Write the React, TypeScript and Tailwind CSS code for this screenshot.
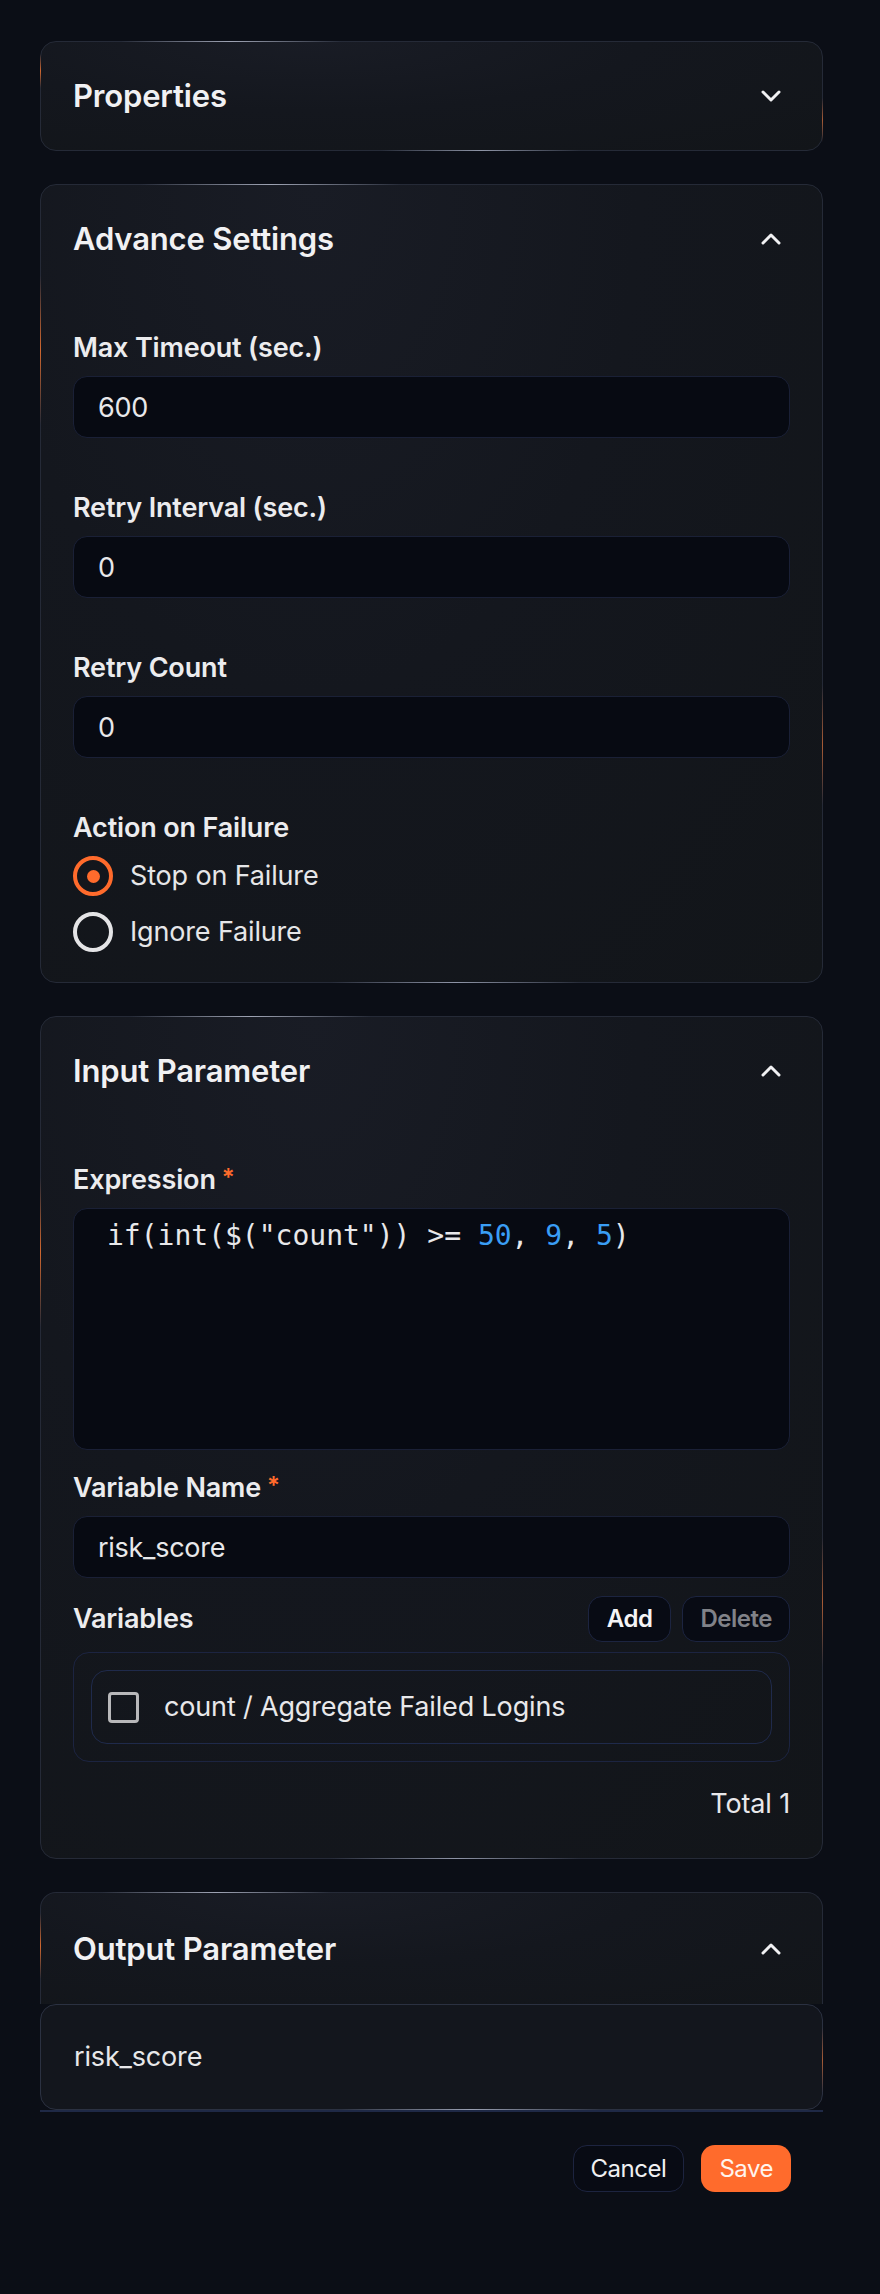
import React from "react";
import { ChevronDown, ChevronUp } from "lucide-react";

type BeamSet = {
  top: string;
  bottom: string;
  left: string;
  right: string;
};

// Thin light streaks running along the card edges.
function Beams({ b }: { b: BeamSet }) {
  return (
    <>
      <span
        className={`pointer-events-none absolute -top-px h-px bg-[linear-gradient(90deg,transparent,#9ea3b3,transparent)] ${b.top}`}
      />
      <span
        className={`pointer-events-none absolute -bottom-px h-px bg-[linear-gradient(90deg,transparent,#8e94a6,transparent)] ${b.bottom}`}
      />
      <span
        className={`pointer-events-none absolute -left-px w-px bg-[linear-gradient(180deg,transparent,#d0672f,transparent)] ${b.left}`}
      />
      <span
        className={`pointer-events-none absolute -right-px w-px bg-[linear-gradient(180deg,transparent,#a65a35,transparent)] ${b.right}`}
      />
    </>
  );
}

const cardSurface =
  "relative rounded-2xl border border-[#252a37] bg-[radial-gradient(ellipse_at_35%_0%,#191c25_0%,#14171e_45%,#121519_100%)]";

function CardHeader({ title, open, h = "h-[108px]" }: { title: string; open: boolean; h?: string }) {
  return (
    <div className={`flex items-center justify-between pl-[32px] pr-[35px] ${h}`}>
      <h2 className="text-[31px] font-semibold leading-[40px] text-[#f1f1f3]">{title}</h2>
      {open ? (
        <ChevronUp size={32} strokeWidth={2.25} className="text-[#f1f1f3]" />
      ) : (
        <ChevronDown size={32} strokeWidth={2.25} className="text-[#f1f1f3]" />
      )}
    </div>
  );
}

function Label({ children, required }: { children: React.ReactNode; required?: boolean }) {
  return (
    <div className="flex h-[40px] items-center text-[27px] font-semibold leading-[40px] text-[#ececee]">
      <span>{children}</span>
      {required && (
        <span className="ml-[6px] self-start text-[24px] leading-[36px] text-[#ff6b2c]">*</span>
      )}
    </div>
  );
}

function TextInput({ value }: { value: string }) {
  return (
    <input
      readOnly
      value={value}
      className="mt-[8px] block h-[62px] w-full rounded-[14px] border border-[#1a2036] bg-[#070a12] px-[24px] text-[27px] tracking-[-0.01em] text-[#e8e8ea] outline-none"
    />
  );
}

function Field({ label, value }: { label: string; value: string }) {
  return (
    <div>
      <Label>{label}</Label>
      <TextInput value={value} />
    </div>
  );
}

function Radio({ label, checked }: { label: string; checked?: boolean }) {
  return (
    <div className="flex h-[40px] items-center gap-[17px]">
      <span
        className={`flex size-[40px] items-center justify-center rounded-full border-[4px] ${
          checked ? "border-[#ff6b2c]" : "border-[#e4e4e6]"
        }`}
      >
        {checked && <span className="size-[13px] rounded-full bg-[#ff6b2c]" />}
      </span>
      <span className="text-[27px] leading-[40px] text-[#e6e6e8]">{label}</span>
    </div>
  );
}

export default function App() {
  return (
    <div className="min-h-screen bg-[#0b0e16] pb-[101px] pl-[40px] pr-[57px] pt-[41px] font-['Inter',sans-serif] tracking-[-0.01em] text-[#ececee]">
      <div className="flex flex-col gap-[33px]">
        {/* Properties (collapsed) */}
        <section className={cardSurface}>
          <Beams
            b={{
              top: "left-[80px] w-[220px]",
              bottom: "left-[340px] w-[200px]",
              left: "top-[12px] h-[34px]",
              right: "top-[56px] h-[44px]",
            }}
          />
          <CardHeader title="Properties" open={false} />
        </section>

        {/* Advance Settings */}
        <section className={cardSurface}>
          <Beams
            b={{
              top: "left-[100px] w-[260px]",
              bottom: "left-[290px] w-[250px]",
              left: "top-[90px] h-[150px]",
              right: "top-[500px] h-[120px]",
            }}
          />
          <CardHeader title="Advance Settings" open />
          <div className="px-[32px] pb-[30px] pt-[35px]">
            <Field label="Max Timeout (sec.)" value="600" />
            <div className="mt-[50px]">
              <Field label="Retry Interval (sec.)" value="0" />
            </div>
            <div className="mt-[50px]">
              <Field label="Retry Count" value="0" />
            </div>
            <div className="mt-[50px]">
              <Label>Action on Failure</Label>
              <div className="mt-[8px] flex flex-col gap-[16px]">
                <Radio label="Stop on Failure" checked />
                <Radio label="Ignore Failure" />
              </div>
            </div>
          </div>
        </section>

        {/* Input Parameter */}
        <section className={cardSurface}>
          <Beams
            b={{
              top: "left-[90px] w-[240px]",
              bottom: "left-[290px] w-[250px]",
              left: "top-[160px] h-[150px]",
              right: "top-[520px] h-[130px]",
            }}
          />
          <CardHeader title="Input Parameter" open />
          <div className="px-[32px] pb-[34px] pt-[35px]">
            <Label required>Expression</Label>
            <div className="mt-[8px] h-[242px] rounded-[14px] border border-[#1a2036] bg-[#070a12] pl-[33px] pt-[9px] font-['DejaVu_Sans_Mono',monospace] text-[28px] leading-[36px] tracking-normal whitespace-pre text-[#e8e8ea]">
              <span>if(int($("count")) &gt;= </span>
              <span className="text-[#3a9ef5]">50</span>
              <span>, </span>
              <span className="text-[#3a9ef5]">9</span>
              <span>, </span>
              <span className="text-[#3a9ef5]">5</span>
              <span>)</span>
            </div>

            <div className="mt-[18px]">
              <Label required>Variable Name</Label>
              <TextInput value="risk_score" />
            </div>

            <div className="mt-[18px] flex h-[46px] items-center justify-between">
              <span className="text-[27px] font-semibold leading-[40px] text-[#ececee]">Variables</span>
              <div className="flex gap-[11px]">
                <button className="h-[46px] rounded-[14px] border border-[#1c2440] bg-[#080b14] px-[18px] text-[24px] font-semibold tracking-[-0.02em] text-[#f4f4f6]">
                  Add
                </button>
                <button className="h-[46px] rounded-[14px] border border-[#1c2440] bg-[#080b14] px-[17px] text-[24px] font-semibold tracking-[-0.02em] text-[#808288]">
                  Delete
                </button>
              </div>
            </div>

            <div className="mt-[10px] rounded-[16px] border border-[#1c2441] p-[17px]">
              <div className="flex h-[74px] items-center gap-[25px] rounded-[16px] border border-[#1f2a4b] pl-[16px]">
                <span className="size-[31px] rounded-[4px] border-[3px] border-[#b8b8ba]" />
                <span className="text-[27px] leading-[40px] text-[#e8e8ea]">count / Aggregate Failed Logins</span>
              </div>
            </div>

            <div className="mt-[22px] text-right text-[27px] leading-[40px] text-[#e8e8ea]">Total 1</div>
          </div>
        </section>

        {/* Output Parameter */}
        <section className="relative">
          <div className="relative rounded-t-2xl border-x border-t border-[#252a37] bg-[radial-gradient(ellipse_at_35%_0%,#191c25_0%,#14171e_45%,#121519_100%)]">
            <span className="pointer-events-none absolute -top-px left-[60px] h-px w-[230px] bg-[linear-gradient(90deg,transparent,#9ea3b3,transparent)]" />
            <span className="pointer-events-none absolute -left-px top-[20px] h-[66px] w-px bg-[linear-gradient(180deg,transparent,#d0672f,transparent)]" />
            <CardHeader title="Output Parameter" open h="h-[111px]" />
          </div>
          <div className="relative flex h-[106px] items-center rounded-2xl border border-[#2b3141] bg-[#13161d] px-[33px] text-[27px] text-[#e8e8ea]">
            <span className="pointer-events-none absolute -bottom-px left-[300px] h-px w-[260px] bg-[linear-gradient(90deg,transparent,#9aa0b2,transparent)]" />
            <span className="pointer-events-none absolute -right-px top-[22px] h-[66px] w-px bg-[linear-gradient(180deg,transparent,#a65a35,transparent)]" />
            risk_score
          </div>
          <div className="h-[2px] bg-[#1f2946]" />
        </section>
      </div>

      <div className="mt-[33px] flex justify-end gap-[17px] pr-[32px]">
        <button className="h-[47px] rounded-[14px] border border-[#1d2440] bg-[#080b14] px-[17px] text-[24px] tracking-[-0.02em] text-[#f0f0f2]">
          Cancel
        </button>
        <button className="h-[47px] rounded-[14px] bg-[#ff6b2c] px-[18px] text-[24px] tracking-[-0.02em] text-[#fff4ec]">
          Save
        </button>
      </div>
    </div>
  );
}
